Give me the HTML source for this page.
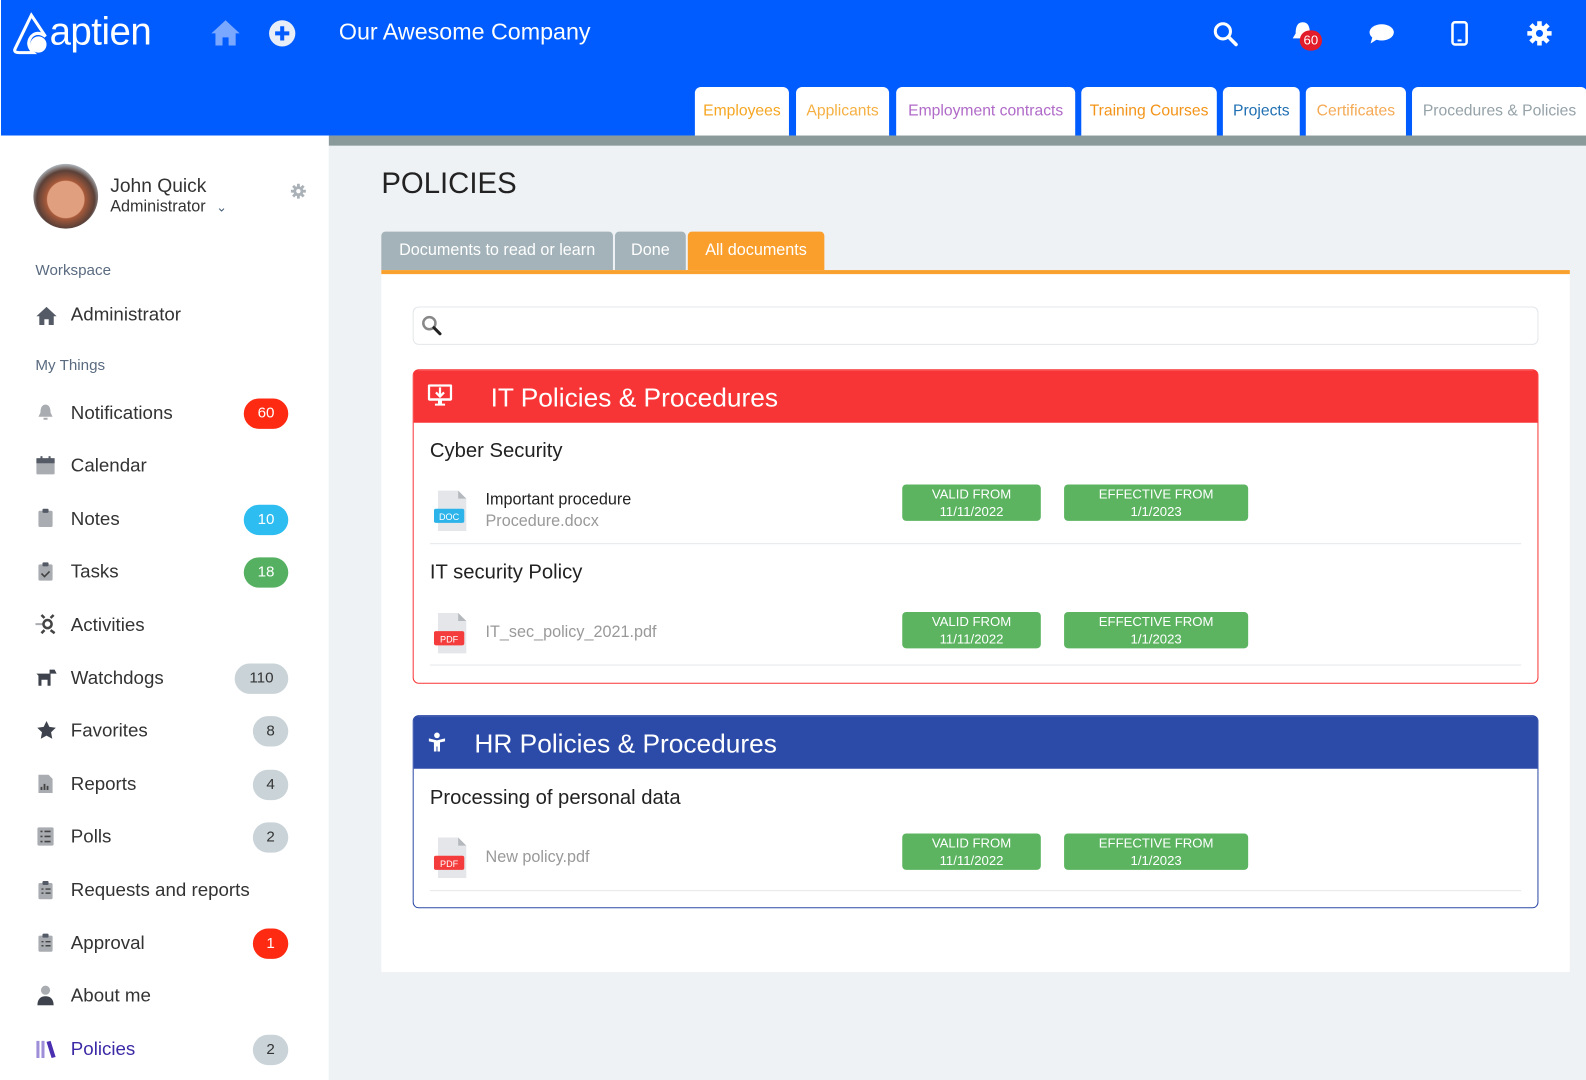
<!DOCTYPE html>
<html><head><meta charset="utf-8"><style>
*{box-sizing:border-box;margin:0;padding:0}
html{width:1586px;height:1080px;overflow:hidden;background:#eff2f5}
body{width:1568px;height:1068px;overflow:hidden;font-family:"Liberation Sans",sans-serif;background:#eff2f5;position:relative;color:#333;transform:scale(1.01148);transform-origin:0 0}
.hdr{position:absolute;left:0;top:0;width:1568px;height:134px;background:#005cff;border-left:1px solid #fff}
.abs{position:absolute}
.tab{position:absolute;top:86px;height:48px;background:#fff;border-radius:6px 6px 0 0;font-size:15.5px;text-align:center;line-height:48px;white-space:nowrap;overflow:hidden}
.grey{position:absolute;left:325px;top:134px;width:1261px;height:10px;background:#8a9a9b}
.side{position:absolute;left:0;top:134px;width:325px;height:946px;background:#fff}
.sec{position:absolute;left:35px;font-size:15px;color:#5a6b80}
.item{position:absolute;left:70px;font-size:18.5px;color:#333}
.ic{position:absolute;left:35px;width:20px;height:20px}
.bd{position:absolute;height:30px;border-radius:15px;font-size:15px;text-align:center;line-height:30px;color:#fff}
.panel{position:absolute;left:377px;top:267px;width:1175px;height:694px;background:#fff;border-top:4px solid #f9a12e}
.box{position:absolute;left:408px;width:1113px;border-radius:6px;background:#fff}
.bh{height:52px;color:#fff;font-size:26px;line-height:54px;padding-left:76px;position:relative;border-radius:4px 4px 0 0}
.st{position:absolute;left:16px;font-size:20px;color:#222}
.pill{position:absolute;background:#5cb461;color:#fff;border-radius:4px;font-size:13px;text-align:center;line-height:17px;padding-top:1px;height:36px}
.file{position:absolute;left:20px;width:34px;height:44px}
.sep{position:absolute;left:16px;right:16px;height:1px;background:#e5e8ea}
</style></head><body>
<div class="hdr">
 <svg class="abs" style="left:10px;top:12px" width="40" height="42" viewBox="0 0 40 42"><path d="M20 3 L4 36 Q2 40 8 40 L22 40 Q14 32 20 24 Q26 18 34 24 Z" fill="none" stroke="#fff" stroke-width="3"/><circle cx="27" cy="32" r="8" fill="#fff"/></svg>
 <div class="abs" style="left:48px;top:11px;font-size:38px;color:#fff;letter-spacing:-0.5px">aptien</div>
 <svg class="abs" style="left:207px;top:18px" width="30" height="28" viewBox="0 0 30 28"><path d="M15 2 L1 15 L5 15 L5 27 L12 27 L12 19 L18 19 L18 27 L25 27 L25 15 L29 15 Z" fill="#7aa7ff"/></svg>
 <svg class="abs" style="left:264px;top:19px" width="28" height="28" viewBox="0 0 28 28"><circle cx="14" cy="14" r="13" fill="#e8eef7"/><path d="M14 7v14M7 14h14" stroke="#005cff" stroke-width="4"/></svg>
 <div class="abs" style="left:334px;top:18px;font-size:23px;color:#fff">Our Awesome Company</div>
 <svg class="abs" style="left:1198px;top:21px" width="26" height="26" viewBox="0 0 26 26"><circle cx="10" cy="10" r="7.5" fill="none" stroke="#fff" stroke-width="3"/><path d="M15.5 15.5L23 23" stroke="#fff" stroke-width="3.5" stroke-linecap="round"/></svg>
 <svg class="abs" style="left:1276px;top:20px" width="22" height="24" viewBox="0 0 22 24"><path d="M11 2 C5 2 4 8 4 13 L1 18 L21 18 L18 13 C18 8 17 2 11 2Z" fill="#fff"/></svg>
 <div class="abs" style="left:1284px;top:30px;width:22px;height:20px;border-radius:10px;background:#e21c2a;color:#fff;font-size:13px;text-align:center;line-height:20px">60</div>
 <svg class="abs" style="left:1352px;top:22px" width="26" height="22" viewBox="0 0 26 22"><ellipse cx="13" cy="10" rx="12" ry="8" fill="#fff"/><path d="M4 14 L2 21 L10 16Z" fill="#fff"/></svg>
 <svg class="abs" style="left:1433px;top:20px" width="18" height="26" viewBox="0 0 18 26"><rect x="2" y="2" width="14" height="22" rx="2.5" fill="none" stroke="#fff" stroke-width="2.5"/><rect x="7" y="19" width="4" height="2" fill="#fff"/></svg>
 <svg class="abs" style="left:1508px;top:20px" width="26" height="26" viewBox="0 0 26 26"><g fill="#fff"><circle cx="13" cy="13" r="8"/><g stroke="#fff" stroke-width="4.5"><path d="M13 1v24M1 13h24M4.5 4.5l17 17M21.5 4.5l-17 17"/></g></g><circle cx="13" cy="13" r="3.5" fill="#005cff"/></svg>
 <div class="tab" style="left:686px;width:93px;color:#f5a623">Employees</div>
 <div class="tab" style="left:786px;width:92px;color:#f5b043">Applicants</div>
 <div class="tab" style="left:885px;width:177px;color:#b06ac8">Employment contracts</div>
 <div class="tab" style="left:1068px;width:134px;color:#f39419">Training Courses</div>
 <div class="tab" style="left:1208px;width:76px;color:#1f6fb2">Projects</div>
 <div class="tab" style="left:1290px;width:99px;color:#f5aa55">Certificates</div>
 <div class="tab" style="left:1395px;width:173px;color:#95a2a8">Procedures &amp; Policies</div>
</div>
<div class="grey"></div>
<div class="side">
 <div class="abs" style="left:33px;top:28px;width:64px;height:64px;border-radius:50%;background:radial-gradient(circle at 50% 55%,#e0a080 0 38%,#a85a3a 40%,#5a4038 60%,#b8c4cc 75%)"></div>
 <div class="abs" style="left:109px;top:40px;font-size:19px;color:#333">John Quick</div>
 <div class="abs" style="left:109px;top:62px;font-size:16px;color:#333">Administrator <span style="color:#4a6078;font-size:13px;margin-left:6px">&#8964;</span></div>
 <svg class="abs" style="left:287px;top:47px" width="16" height="16" viewBox="0 0 26 26"><circle cx="13" cy="13" r="8" fill="#aab2b8"/><g stroke="#aab2b8" stroke-width="4.5"><path d="M13 1v24M1 13h24M4.5 4.5l17 17M21.5 4.5l-17 17"/></g><circle cx="13" cy="13" r="3.5" fill="#fff"/></svg>
 <div class="sec" style="top:125px">Workspace</div>
 <svg class="ic" style="top:168px;width:22px" viewBox="0 0 30 28"><path d="M15 2 L1 15 L5 15 L5 27 L12 27 L12 19 L18 19 L18 27 L25 27 L25 15 L29 15 Z" fill="#555b66"/></svg>
 <div class="item" style="top:166px">Administrator</div>
 <div class="sec" style="top:219px">My Things</div>
</div>
<div class="ic" style="top:398px"><svg width="20" height="20" viewBox="0 0 20 20"><path d="M10 2C6 2 5 6 5 10L3 14H17L15 10C15 6 14 2 10 2Z M8 15h4v2h-4z" fill="#a9acb1"/></svg></div>
<div class="item" style="top:397px">Notifications</div><div class="bd" style="left:241px;top:394px;width:44px;background:#ff2a12">60</div>
<div class="ic" style="top:450px"><svg width="20" height="20" viewBox="0 0 20 20"><rect x="1" y="3" width="18" height="16" rx="1" fill="#a9acb1"/><rect x="1" y="3" width="18" height="5" fill="#555b66"/><rect x="5" y="1" width="2" height="4" fill="#555b66"/><rect x="13" y="1" width="2" height="4" fill="#555b66"/></svg></div>
<div class="item" style="top:449px">Calendar</div>
<div class="ic" style="top:502px"><svg width="20" height="20" viewBox="0 0 20 20"><rect x="3" y="3" width="14" height="16" rx="1.5" fill="#a9acb1"/><rect x="7" y="1" width="6" height="4" rx="1" fill="#555b66"/></svg></div>
<div class="item" style="top:502px">Notes</div><div class="bd" style="left:241px;top:499px;width:44px;background:#2dbdf0">10</div>
<div class="ic" style="top:555px"><svg width="20" height="20" viewBox="0 0 20 20"><rect x="3" y="3" width="14" height="16" rx="1.5" fill="#a9acb1"/><rect x="7" y="1" width="6" height="4" rx="1" fill="#555b66"/><path d="M6 12l3 3 5-5" stroke="#444" stroke-width="1.6" fill="none"/></svg></div>
<div class="item" style="top:554px">Tasks</div><div class="bd" style="left:241px;top:551px;width:44px;background:#55b062">18</div>
<div class="ic" style="top:607px"><svg width="24" height="20" viewBox="0 0 24 20"><path d="M0 10h8" stroke="#a9acb1" stroke-width="2"/><circle cx="12" cy="10" r="4" fill="none" stroke="#444" stroke-width="2.5"/><path d="M9 4L6 1M15 16l4 3M15 4l3-3M9 16l-3 3" stroke="#444" stroke-width="2.5"/></svg></div>
<div class="item" style="top:607px">Activities</div>
<div class="ic" style="top:660px"><svg width="22" height="20" viewBox="0 0 22 20"><path d="M1 6h14v12h-3v-6h-6v6H3V8z M14 2h5l2 4h-7z" fill="#3d424c"/></svg></div>
<div class="item" style="top:659px">Watchdogs</div><div class="bd" style="left:232px;top:656px;width:53px;background:#c9d3d8;color:#333">110</div>
<div class="ic" style="top:712px"><svg width="22" height="20" viewBox="0 0 24 24"><path d="M12 1l3.4 7 7.6 1-5.6 5.3 1.4 7.7L12 18.3 5.2 22l1.4-7.7L1 9l7.6-1z" fill="#3d424c"/></svg></div>
<div class="item" style="top:711px">Favorites</div><div class="bd" style="left:250px;top:708px;width:35px;background:#c9d3d8;color:#333">8</div>
<div class="ic" style="top:765px"><svg width="20" height="20" viewBox="0 0 20 20"><path d="M3 1h10l4 4v14H3z" fill="#a9acb1"/><path d="M6 16v-3M9 16v-6M12 16v-4" stroke="#444" stroke-width="1.8"/></svg></div>
<div class="item" style="top:764px">Reports</div><div class="bd" style="left:250px;top:761px;width:35px;background:#c9d3d8;color:#333">4</div>
<div class="ic" style="top:817px"><svg width="20" height="20" viewBox="0 0 20 20"><rect x="2" y="1" width="16" height="18" rx="1.5" fill="#a9acb1"/><path d="M5 5h2M5 10h2M5 15h2M9 5h6M9 10h6M9 15h6" stroke="#444" stroke-width="1.6"/></svg></div>
<div class="item" style="top:816px">Polls</div><div class="bd" style="left:250px;top:813px;width:35px;background:#c9d3d8;color:#333">2</div>
<div class="ic" style="top:870px"><svg width="20" height="20" viewBox="0 0 20 20"><rect x="3" y="3" width="14" height="16" rx="1.5" fill="#a9acb1"/><rect x="7" y="1" width="6" height="4" rx="1" fill="#555b66"/><path d="M6 9h2M6 13h2M10 9h5M10 13h5" stroke="#444" stroke-width="1.4"/></svg></div>
<div class="item" style="top:869px">Requests and reports</div>
<div class="ic" style="top:922px"><svg width="20" height="20" viewBox="0 0 20 20"><rect x="3" y="3" width="14" height="16" rx="1.5" fill="#a9acb1"/><rect x="7" y="1" width="6" height="4" rx="1" fill="#555b66"/><path d="M6 9h2M6 13h2M10 9h5M10 13h5" stroke="#444" stroke-width="1.4"/></svg></div>
<div class="item" style="top:921px">Approval</div><div class="bd" style="left:250px;top:918px;width:35px;background:#ff2a12">1</div>
<div class="ic" style="top:974px"><svg width="20" height="20" viewBox="0 0 20 20"><circle cx="10" cy="5" r="4.5" fill="#a9acb1"/><path d="M2 20c0-7 4-9 8-9s8 2 8 9z" fill="#3d424c"/></svg></div>
<div class="item" style="top:973px">About me</div>
<div class="ic" style="top:1027px"><svg width="22" height="20" viewBox="0 0 22 20"><path d="M1 2h3v17H1zM6 2h3v17H6z" fill="#9e8fd8"/><path d="M11 3l4-1 5 16-4 1z" fill="#4a2fb0"/></svg></div>
<div class="item" style="top:1026px;color:#3b2aa6">Policies</div><div class="bd" style="left:250px;top:1023px;width:35px;background:#c9d3d8;color:#333">2</div>

<div class="abs" style="left:377px;top:166px;font-size:29px;color:#222">POLICIES</div>
<div class="abs" style="left:377px;top:229px;width:229px;height:38px;background:#a3b3b9;border-radius:4px 4px 0 0;color:#fff;font-size:16px;line-height:38px;text-align:center">Documents to read or learn</div>
<div class="abs" style="left:608px;top:229px;width:70px;height:38px;background:#a3b3b9;border-radius:4px 4px 0 0;color:#fff;font-size:16px;line-height:38px;text-align:center">Done</div>
<div class="abs" style="left:680px;top:229px;width:135px;height:40px;background:#fa9f2c;border-radius:4px 4px 0 0;color:#fff;font-size:16px;line-height:38px;text-align:center">All documents</div>
<div class="panel"></div>
<div class="abs" style="left:408px;top:303px;width:1113px;height:38px;border:1px solid #e3e7ea;border-radius:6px;background:#fff"></div>
<svg class="abs" style="left:416px;top:311px" width="22" height="22" viewBox="0 0 22 22"><circle cx="8.5" cy="8.5" r="6" fill="none" stroke="#888" stroke-width="2.5"/><path d="M13 13l6 6" stroke="#222" stroke-width="3" stroke-linecap="round"/></svg>

<div class="box" style="top:365px;height:311px;border:1.5px solid #f83536">
 <div class="bh" style="background:#f83536">IT Policies &amp; Procedures
  <svg class="abs" style="left:14px;top:14px" width="24" height="22" viewBox="0 0 24 22"><rect x="1" y="1" width="22" height="14" rx="1" fill="none" stroke="#fff" stroke-width="2.5"/><path d="M12 3v8M8 8l4 4 4-4" stroke="#fff" stroke-width="2.2" fill="none"/><path d="M10 16h4v3h3v2H7v-2h3z" fill="#fff"/></svg>
 </div>
 <div class="st" style="top:69px">Cyber Security</div>
 <svg class="file" style="top:117px" viewBox="0 0 34 44"><path d="M4 2h20l8 8v32H4z" fill="#e4e6e9"/><path d="M24 2v8h8z" fill="#b5b9bd"/><rect x="0" y="20" width="30" height="14" rx="2" fill="#2cb3ea"/><text x="15" y="31" font-size="9" fill="#fff" text-anchor="middle" font-family="Liberation Sans">DOC</text></svg>
 <div class="abs" style="left:71px;top:120px;font-size:16px;color:#222">Important procedure</div>
 <div class="abs" style="left:71px;top:141px;font-size:16px;color:#999">Procedure.docx</div>
 <div class="pill" style="left:483px;top:113px;width:137px">VALID FROM<br>11/11/2022</div>
 <div class="pill" style="left:643px;top:113px;width:182px">EFFECTIVE FROM<br>1/1/2023</div>
 <div class="sep" style="top:171px"></div>
 <div class="st" style="top:189px">IT security Policy</div>
 <svg class="file" style="top:238px" viewBox="0 0 34 44"><path d="M4 2h20l8 8v32H4z" fill="#e4e6e9"/><path d="M24 2v8h8z" fill="#b5b9bd"/><rect x="0" y="20" width="30" height="14" rx="2" fill="#f43c3c"/><text x="15" y="31" font-size="9" fill="#fff" text-anchor="middle" font-family="Liberation Sans">PDF</text></svg>
 <div class="abs" style="left:71px;top:251px;font-size:16px;color:#999">IT_sec_policy_2021.pdf</div>
 <div class="pill" style="left:483px;top:239px;width:137px">VALID FROM<br>11/11/2022</div>
 <div class="pill" style="left:643px;top:239px;width:182px">EFFECTIVE FROM<br>1/1/2023</div>
 <div class="sep" style="top:291px"></div>
</div>

<div class="box" style="top:707px;height:191px;border:1.5px solid #2c4aa7">
 <div class="bh" style="background:#2c4aa7;padding-left:60px">HR Policies &amp; Procedures
  <svg class="abs" style="left:14px;top:16px" width="18" height="20" viewBox="0 0 18 20"><circle cx="9" cy="3" r="2.8" fill="#fff"/><path d="M1 6l8 2 8-2v3l-5 1v9h-2.5v-5h-1v5H6v-9L1 9z" fill="#fff"/></svg>
 </div>
 <div class="st" style="top:70px">Processing of personal data</div>
 <svg class="file" style="top:118px" viewBox="0 0 34 44"><path d="M4 2h20l8 8v32H4z" fill="#e4e6e9"/><path d="M24 2v8h8z" fill="#b5b9bd"/><rect x="0" y="20" width="30" height="14" rx="2" fill="#f43c3c"/><text x="15" y="31" font-size="9" fill="#fff" text-anchor="middle" font-family="Liberation Sans">PDF</text></svg>
 <div class="abs" style="left:71px;top:131px;font-size:16px;color:#999">New policy.pdf</div>
 <div class="pill" style="left:483px;top:116px;width:137px">VALID FROM<br>11/11/2022</div>
 <div class="pill" style="left:643px;top:116px;width:182px">EFFECTIVE FROM<br>1/1/2023</div>
 <div class="sep" style="top:172px"></div>
</div>
</body></html>
